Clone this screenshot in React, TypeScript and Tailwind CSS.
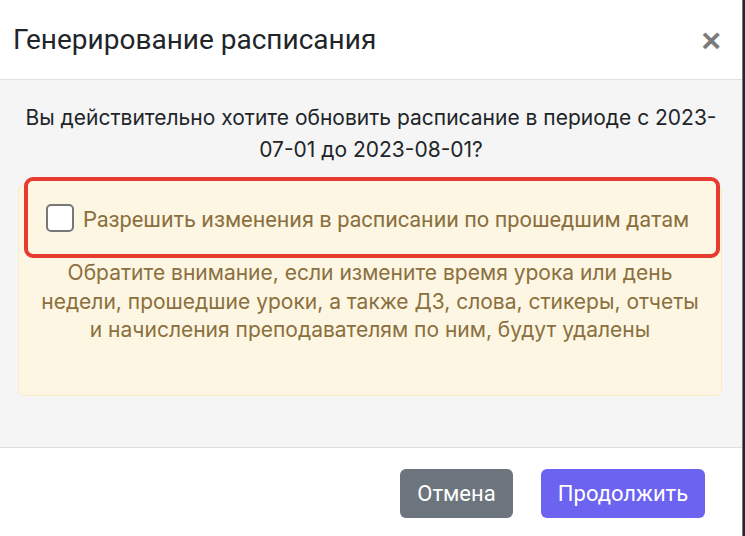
import React from 'react';

export default function App() {
  return (
    <div className="flex w-[745px] h-[536px] overflow-hidden bg-[#2a2233]">
      {/* MODAL */}
      <div className="w-[743px] h-full bg-white flex flex-col border-r border-[#777]">
        {/* header */}
        <div className="h-[80px] shrink-0 flex items-center justify-between pl-[13px] pr-[21px] border-b border-[#dee2e6]">
          <h2 className="font-['Roboto',sans-serif] text-[28px] text-[#212529] leading-none">
            Генерирование расписания
          </h2>
          <button className="font-['Liberation_Sans',sans-serif] font-bold text-[34px] leading-none text-[#7b7b7b]">
            ×
          </button>
        </div>

        {/* body */}
        <div className="h-[367px] shrink-0 bg-[#f5f5f5] pt-[22px] font-['Inter',sans-serif]">
          <p className="text-center text-[21px] leading-[31.5px] text-[#212529]">
            Вы действительно хотите обновить расписание в периоде с 2023-
            <br />
            07-01 до 2023-08-01?
          </p>

          <div className="mt-[20px] ml-[18px] mr-[20px] h-[211px] bg-[#fcf6e2] border border-[#f8ebc6] rounded-[6px]">
            {/* highlighted option */}
            <div className="-mt-[9px] ml-[5px] mr-[1px] h-[81px] border-4 border-[#e53b30] rounded-[9px] bg-[#fcf6e2] flex items-center pl-[18px] gap-[9px]">
              <span className="w-[28px] h-[28px] shrink-0 rounded-[5px] border-2 border-[#777] bg-white" />
              <span className="font-['Roboto',sans-serif] text-[21.8px] text-[#8b6f3e] pt-[6px]">
                Разрешить изменения в расписании по прошедшим датам
              </span>
            </div>
            <p className="text-center text-[21px] leading-[28.5px] text-[#8b6f3e] mt-[1px]">
              Обратите внимание, если измените время урока или день
              <br />
              недели, прошедшие уроки, а также ДЗ, слова, стикеры, отчеты
              <br />
              и начисления преподавателям по ним, будут удалены
            </p>
          </div>
        </div>

        {/* footer */}
        <div className="flex-1 border-t border-[#e0dde6] flex items-start justify-end pt-[21px] pr-[37px] gap-[28px] font-['Roboto',sans-serif]">
          <button className="w-[113px] h-[49px] rounded-[6px] bg-[#6c757d] text-white text-[22px]">
            Отмена
          </button>
          <button className="w-[164px] h-[49px] rounded-[6px] bg-[#6c63f1] text-white text-[22px]">
            Продолжить
          </button>
        </div>
      </div>
    </div>
  );
}
